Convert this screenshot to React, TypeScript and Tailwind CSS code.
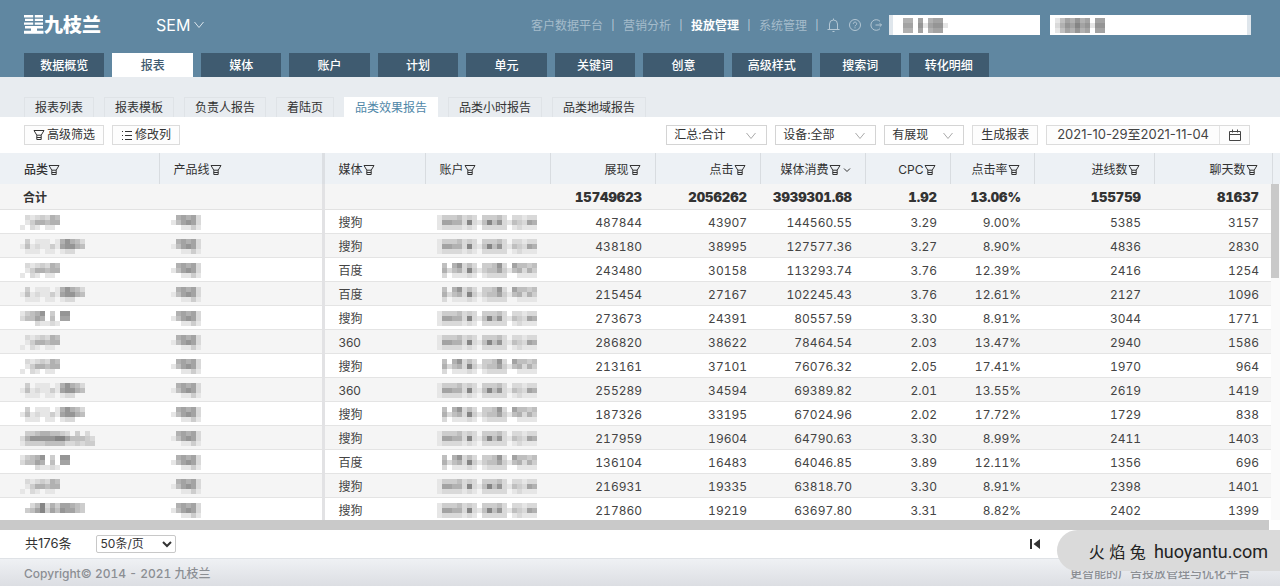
import React from 'react'

const topLinks = ['客户数据平台', '营销分析', '投放管理', '系统管理']

const mainTabs = ['数据概览', '报表', '媒体', '账户', '计划', '单元', '关键词', '创意', '高级样式', '搜索词', '转化明细']

const reportTabs = ['报表列表', '报表模板', '负责人报告', '着陆页', '品类效果报告', '品类小时报告', '品类地域报告']

// Masked text: one digit per cell, 0 is empty and 8 is the darkest
const shades = ['none', '#e6e6e6', '#d9d9d9', '#cdcdcd', '#bfbfbf', '#b1b1b1', '#a3a3a3', '#959595', '#858585']

const masks = {
  short: ['02123254', '01355455', '10210110'],
  medium: ['0301110157542', '1412113167754', '0111011012200'],
  name: ['1345703077', '2446504066', '0002112100'],
  long: ['033455443203020', '257777788644432', '133334444223233'],
  wide: ['0024825366543', '0346836476643', '0000000000000'],
  product: ['056562', '146762', '001131'],
  accountA: ['13334232033342022122', '16655282148472143265', '12222121022222012111'],
  accountB: ['04057242033472064434', '05245283134463145253', '02011121012222001111'],
  user: ['0550605660', '0660716771', '0550605660'],
  company: ['1465756066', '2576867177', '1465756066']
}

type MaskName = keyof typeof masks

interface ReportRow {
  category: MaskName
  media: string
  account: MaskName
  values: string[]
}

const rows: ReportRow[] = [
  { category: 'short', media: '搜狗', account: 'accountA', values: ['487844', '43907', '144560.55', '3.29', '9.00%', '5385', '3157'] },
  { category: 'medium', media: '搜狗', account: 'accountA', values: ['438180', '38995', '127577.36', '3.27', '8.90%', '4836', '2830'] },
  { category: 'short', media: '百度', account: 'accountB', values: ['243480', '30158', '113293.74', '3.76', '12.39%', '2416', '1254'] },
  { category: 'medium', media: '百度', account: 'accountB', values: ['215454', '27167', '102245.43', '3.76', '12.61%', '2127', '1096'] },
  { category: 'name', media: '搜狗', account: 'accountA', values: ['273673', '24391', '80557.59', '3.30', '8.91%', '3044', '1771'] },
  { category: 'short', media: '360', account: 'accountA', values: ['286820', '38622', '78464.54', '2.03', '13.47%', '2940', '1586'] },
  { category: 'short', media: '搜狗', account: 'accountB', values: ['213161', '37101', '76076.32', '2.05', '17.41%', '1970', '964'] },
  { category: 'medium', media: '360', account: 'accountA', values: ['255289', '34594', '69389.82', '2.01', '13.55%', '2619', '1419'] },
  { category: 'medium', media: '搜狗', account: 'accountB', values: ['187326', '33195', '67024.96', '2.02', '17.72%', '1729', '838'] },
  { category: 'long', media: '搜狗', account: 'accountA', values: ['217959', '19604', '64790.63', '3.30', '8.99%', '2411', '1403'] },
  { category: 'name', media: '百度', account: 'accountB', values: ['136104', '16483', '64046.85', '3.89', '12.11%', '1356', '696'] },
  { category: 'short', media: '搜狗', account: 'accountA', values: ['216931', '19335', '63818.70', '3.30', '8.91%', '2398', '1401'] },
  { category: 'wide', media: '搜狗', account: 'accountA', values: ['217860', '19219', '63697.80', '3.31', '8.82%', '2402', '1399'] }
]

const totals = ['15749623', '2056262', '3939301.68', '1.92', '13.06%', '155759', '81637']

const numberColumns = ['展现', '点击', '媒体消费', 'CPC', '点击率', '进线数', '聊天数']

const Mask: React.FC<{ name: MaskName }> = ({ name }) => {
  const lines = masks[name]
  return (
    <svg width={lines[0].length * 5} height={15} className="block shrink-0" shapeRendering="crispEdges" aria-hidden="true">
      {lines.map((line, y) =>
        line.split('').map((cell, x) => (
          <rect key={`${x}-${y}`} x={x * 5} y={y * 5} width={5} height={5} fill={shades[Number(cell)]} />
        ))
      )}
    </svg>
  )
}

const FilterIcon = () => (
  <svg width="12" height="12" viewBox="0 0 12 12" fill="none" stroke="currentColor" className="inline-block shrink-0 align-[-2px]" aria-hidden="true">
    <path d="M1 1.5h10L8.2 6.2H3.8L1 1.5Z" />
    <path d="M3.8 6.2v4.3h4.4V6.2M3.8 8.5h4.4" />
  </svg>
)

const Chevron: React.FC<{ className?: string }> = ({ className = '' }) => (
  <svg width="12" height="8" viewBox="0 0 12 8" fill="none" stroke="currentColor" className={className} aria-hidden="true">
    <path d="M1.5 1 6 6.5 10.5 1" />
  </svg>
)

const LogoMark = () => (
  <svg width="20" height="20" viewBox="0 0 20 20" fill="#ffffff" aria-hidden="true">
    <path d="M0 0h9.2v2.4H0zM10.8 0H19v2.4h-8.2zM1 3.7h8.2v2.4H1zM10.8 3.7H19v2.4h-8.2zM0 7.4h9.2v2.4H0zM10.8 7.4H19v2.4h-8.2zM1 11.1h18v2.4H1zM7 13h6v4H7zM0 15.8h19.5v3H0z" />
  </svg>
)

const ToolButton: React.FC<{ children: React.ReactNode }> = ({ children }) => (
  <button type="button" className="flex h-5 items-center gap-[2px] border border-[#dcdcdc] bg-[#fdfdfd] px-2">
    {children}
  </button>
)

const ToolSelect: React.FC<{ label: string; value: string; width: string }> = ({ label, value, width }) => (
  <div className={`relative ${width}`}>
    <select aria-label={label} className="block h-5 w-full appearance-none border border-[#d4d4d4] bg-white pl-[7px] text-xs leading-[18px] text-[#333]">
      <option>{value}</option>
    </select>
    <Chevron className="pointer-events-none absolute top-[7px] right-[10px] text-[#aaa]" />
  </div>
)

const Header = () => (
  <header className="bg-[#6087a1]">
    <div className="flex h-[53px] items-center justify-between pr-[29px] pl-6 pb-[3px]">
      <div className="flex items-center">
        <a href="#home" className="flex items-center text-[19px] leading-none font-black text-white">
          <LogoMark />
          <span>九枝兰</span>
        </a>
        <button type="button" className="ml-[55px] flex items-center gap-[3px] text-base text-white">
          SEM
          <Chevron className="text-[#dbe5ec]" />
        </button>
      </div>

      <div className="flex items-center">
        <nav className="flex items-center pt-px">
          {topLinks.map((link) => (
            <React.Fragment key={link}>
              <a href="#link" className={link === '投放管理' ? 'font-bold text-white' : 'text-[#a5bccb]'}>{link}</a>
              <span className="w-5 text-center text-[10px] text-[#c3d2dc]">|</span>
            </React.Fragment>
          ))}
        </nav>
        <div className="flex items-center gap-[9px] text-[#b3c6d3]">
          <svg width="13" height="14" viewBox="0 0 13 14" fill="none" stroke="currentColor" aria-hidden="true">
            <path d="M.5 11.5h12M2.5 11.5V6a4 4 0 0 1 8 0v5.5M6.5 2V.5M5.5 13.5h2" />
          </svg>
          <svg width="12" height="12" viewBox="0 0 12 12" fill="none" stroke="currentColor" aria-hidden="true">
            <circle cx="6" cy="6" r="5.5" />
            <path d="M4.3 4.8a1.7 1.7 0 1 1 2.6 1.4c-.6.4-.9.6-.9 1.2M6 8.3v1" />
          </svg>
          <svg width="12" height="12" viewBox="0 0 12 12" fill="none" stroke="currentColor" aria-hidden="true">
            <path d="M10 2.3A5.3 5.3 0 1 0 10 9.7M5.5 6h6M9.7 4.2 11.5 6 9.7 7.8" />
          </svg>
        </div>
        <button type="button" aria-label="用户" className="ml-[7px] flex h-5 w-[151px] items-center border-l-4 border-[#dfe6ec] bg-white pl-[5px]">
          <Mask name="user" />
        </button>
        <button type="button" aria-label="公司" className="ml-[10px] flex h-5 w-[201px] items-center border-r-4 border-[#dfe6ec] bg-white pl-[5px]">
          <Mask name="company" />
        </button>
      </div>
    </div>

    <nav className="mx-6 grid max-w-[965px] grid-cols-11 gap-2">
      {mainTabs.map((tab) => (
        <a
          key={tab}
          href="#tab"
          className={`flex h-6 items-center justify-center pt-[2px] font-medium ${tab === '报表' ? 'bg-white text-[#3f5b70]' : 'bg-[#3f5b70] text-white'}`}
        >
          {tab}
        </a>
      ))}
    </nav>
  </header>
)

const ReportTabs = () => (
  <nav className="flex h-10 items-end gap-[10px] bg-[#e8ecf0] px-6">
    {reportTabs.map((tab) => (
      <a
        key={tab}
        href="#report"
        className={`flex h-5 items-center border border-b-0 px-[10px] ${tab === '品类效果报告' ? 'border-white bg-white text-[#4f87a8]' : 'border-[#dfe3e7] text-[#333]'}`}
      >
        {tab}
      </a>
    ))}
  </nav>
)

const Toolbar = () => (
  <div className="flex items-center justify-between bg-white pt-2 pr-[30px] pb-2 pl-6">
    <div className="flex gap-2">
      <ToolButton>
        <FilterIcon />
        高级筛选
      </ToolButton>
      <ToolButton>
        <svg width="12" height="12" viewBox="0 0 12 12" stroke="currentColor" aria-hidden="true">
          <path d="M1 2.5h1M1 6.5h1M1 10.5h1M4 2.5h7M4 6.5h7M4 10.5h7" />
        </svg>
        修改列
      </ToolButton>
    </div>
    <div className="flex gap-2">
      <ToolSelect label="汇总" value="汇总:合计" width="w-[101px]" />
      <ToolSelect label="设备" value="设备:全部" width="w-[101px]" />
      <ToolSelect label="展现" value="有展现" width="w-20" />
      <ToolButton>生成报表</ToolButton>
      <button type="button" className="flex h-5 items-center border border-[#dcdcdc] bg-[#fdfdfd] text-[#444]">
        <span className="px-[10px] text-[13px]">2021-10-29至2021-11-04</span>
        <span className="flex h-full w-[30px] items-center justify-center border-l border-[#e4e4e4]">
          <svg width="12" height="12" viewBox="0 0 12 12" fill="none" stroke="currentColor" aria-hidden="true">
            <path d="M.5 2.5h11v9H.5zM.5 5.5h11M3.5.5v3M8.5.5v3" />
          </svg>
        </span>
      </button>
    </div>
  </div>
)

const ReportTable = () => (
  <div className="relative overflow-hidden pb-2">
    <table className="w-full table-fixed border-collapse text-[#444]">
      <colgroup>
        <col className="w-[159px]" />
        <col className="w-[164px]" />
        <col className="w-[102px]" />
        <col className="w-[125px]" />
        <col className="w-[105px]" />
        <col className="w-[105px]" />
        <col className="w-[105px]" />
        <col className="w-[85px]" />
        <col className="w-[84px]" />
        <col className="w-[120px]" />
        <col className="w-[118px]" />
        <col className="w-[8px]" />
      </colgroup>
      <thead>
        <tr className="h-[31px] bg-[#edf1f5] text-left text-[#333] [&>th]:pt-[2px]">
          <th className="border-r border-[#d8dce0] pl-6 font-medium">品类<FilterIcon /></th>
          <th className="border-r-[3px] border-[#dcdfe3] pl-[14px] font-normal">产品线<FilterIcon /></th>
          <th className="border-r border-[#d8dce0] pl-[14px] font-normal">媒体<FilterIcon /></th>
          <th className="border-r border-[#d8dce0] pl-[14px] font-normal">账户<FilterIcon /></th>
          {numberColumns.map((column) => (
            <th key={column} className="border-r border-[#d8dce0] pr-[14px] text-right font-normal whitespace-nowrap">
              {column}
              <FilterIcon />
              {column === '媒体消费' && (
                <svg width="8" height="6" viewBox="0 0 8 6" fill="none" stroke="currentColor" className="ml-[2px] inline-block" aria-hidden="true">
                  <path d="M1 1.5 4 4.5 7 1.5" />
                </svg>
              )}
            </th>
          ))}
          <th />
        </tr>
      </thead>
      <tbody className="[&_td]:pt-[3px]">
        <tr className="h-[25px] border-b border-[#e2e2e2] bg-[#f5f5f5] text-[13px] text-[#333]">
          <td className="pl-[23px] text-xs font-bold">合计</td>
          <td className="border-r-[3px] border-[#e2e2e4]" />
          <td />
          <td />
          {totals.map((total, i) => (
            <td key={i} className="px-[13px] text-right font-black tabular-nums">
              <div className="overflow-hidden">{total}</div>
            </td>
          ))}
          <td />
        </tr>
        {rows.map((row, i) => (
          <tr key={i} className="h-6 border-b border-[#e4e4e4] odd:bg-[#f5f5f5] even:bg-white">
            <td className="pl-5"><Mask name={row.category} /></td>
            <td className="border-r-[3px] border-[#e2e2e4] pl-3"><Mask name="product" /></td>
            <td className="pl-[14px]">{row.media}</td>
            <td className="pl-3"><Mask name={row.account} /></td>
            {row.values.map((value, j) => (
              <td key={j} className="pr-[13px] text-right tabular-nums">{value}</td>
            ))}
            <td />
          </tr>
        ))}
      </tbody>
    </table>

    {/* Scrollbars */}
    <div className="absolute top-[31px] right-0 bottom-0 w-[9px] bg-[#fafafa]">
      <div className="h-[94px] w-2 bg-[#c9c9c9]" />
    </div>
    <div className="absolute inset-x-0 bottom-0 h-[10px] bg-white pr-[11px]">
      <div className="h-full bg-[#c9c9c9]" />
    </div>
  </div>
)

const Pagination = () => (
  <div className="flex h-7 items-center bg-white pl-[25px] text-[#333]">
    <span className="text-[13px]">共176条</span>
    <div className="relative ml-6 w-20">
      <select aria-label="每页条数" className="block h-[18px] w-full appearance-none rounded-xs border border-[#c8c8c8] bg-white pl-1 text-xs leading-4">
        <option>50条/页</option>
      </select>
      <svg width="10" height="7" viewBox="0 0 10 7" fill="none" stroke="#333" strokeWidth="2" className="pointer-events-none absolute top-[6px] right-1" aria-hidden="true">
        <path d="M1 1 5 5 9 1" />
      </svg>
    </div>
    <button type="button" aria-label="首页" className="mr-[239px] ml-auto">
      <svg width="11" height="10" viewBox="0 0 11 10" fill="#333" aria-hidden="true">
        <path d="M0 0h2v10H0zM10 0v10L3.5 5z" />
      </svg>
    </button>
  </div>
)

const Footer = () => (
  <footer className="flex h-7 items-center justify-between border-t border-[#dfe2e6] bg-gradient-to-b from-[#eff1f4] to-[#dcdee3] pt-1 pr-[30px] pl-6 font-medium text-[#8b8e93]">
    <span className="tabular-nums">Copyright© 2014 - 2021 九枝兰</span>
    <span>更智能的广告投放管理与优化平台</span>
  </footer>
)

const App: React.FC = () => {
  return (
    <div className="relative bg-white font-[Inter,'Noto_Sans_CJK_SC',sans-serif] text-xs text-[#333]">
      <Header />
      <ReportTabs />
      <Toolbar />
      <ReportTable />
      <Pagination />
      <Footer />
      <div className="absolute right-0 bottom-[15px] flex h-[41px] items-center gap-2 rounded-l-full bg-[#dadada] pt-1 pr-3 pl-8 text-[#222]">
        <span className="text-base">火 焰 兔</span>
        <span className="font-[Roboto,sans-serif] text-[18px] leading-none">huoyantu.com</span>
      </div>
    </div>
  )
}

export default App
